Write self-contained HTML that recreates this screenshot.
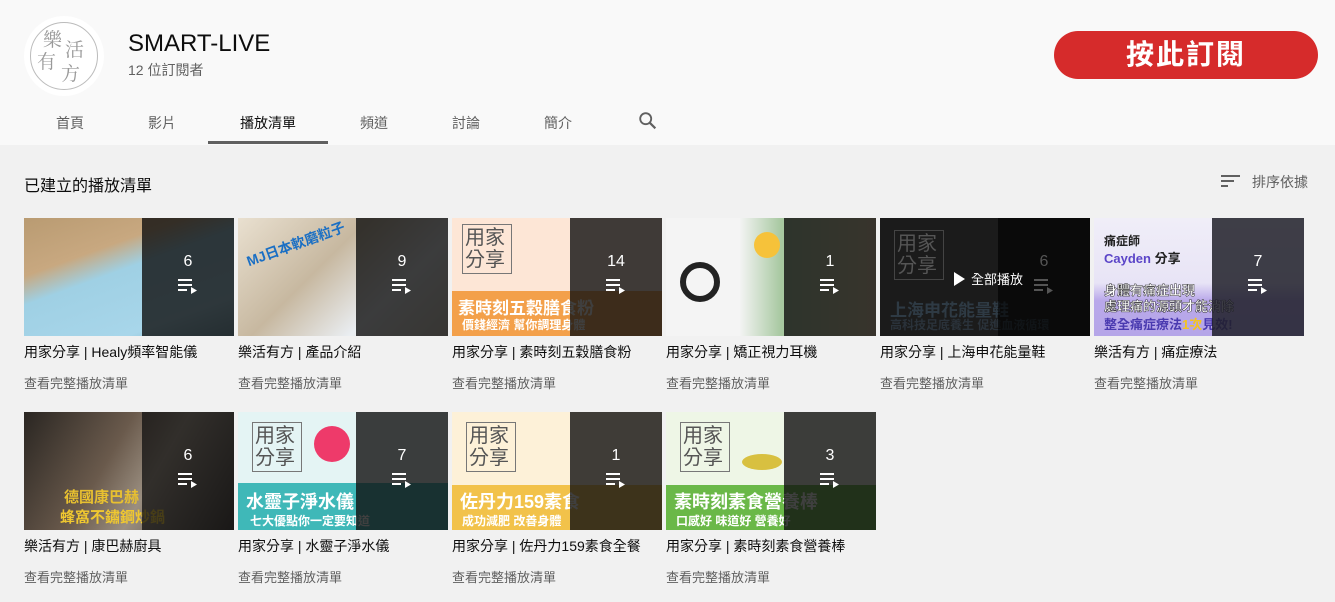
<!DOCTYPE html>
<html><head><meta charset="utf-8"><style>
*{margin:0;padding:0;box-sizing:border-box}
body{width:1335px;height:602px;overflow:hidden;background:#f1f1f1;font-family:"Liberation Sans","Noto Sans CJK TC",sans-serif;position:relative}
.hdr{position:absolute;left:0;top:0;width:1335px;height:145px;background:#f9f9f9}
.av{position:absolute;left:24px;top:16px;width:80px;height:80px;border-radius:50%;background:#fff}
.av .in{position:absolute;left:6px;top:6px;width:68px;height:68px;border-radius:50%;border:1px solid #bbb;color:#999;font-size:19px;line-height:20px;font-family:"Noto Serif CJK SC",serif}
.name{position:absolute;left:128px;top:30px;font-size:24px;color:#0d0d0d}
.subs{position:absolute;left:128px;top:60px;font-size:14px;color:#606060}
.btn{position:absolute;left:1054px;top:31px;width:264px;height:48px;border-radius:24px;background:#d62b2b;color:#fff;font-size:28px;font-weight:bold;text-align:center;line-height:48px;letter-spacing:2px}
.tab{position:absolute;top:113px;font-size:14px;color:#606060}
.ul{position:absolute;left:208px;top:141px;width:120px;height:3px;background:#606060}
.h2{position:absolute;left:24px;top:172px;font-size:16px;color:#0d0d0d}
.sort{position:absolute;left:1252px;top:172px;font-size:14px;color:#606060}
.card{position:absolute;width:210px;height:118px;overflow:hidden}
.ov{position:absolute;right:0;top:0;width:92px;height:118px;background:rgba(15,15,15,.8);color:#fff;text-align:center}
.ov .n{margin-top:34px;font-size:16px;line-height:20px}
.ov svg{display:block;margin:6px auto 0}
.t{position:absolute;font-size:14px;color:#0d0d0d;width:210px;white-space:nowrap;overflow:hidden}
.l{position:absolute;font-size:13px;color:#606060}
.cap{position:absolute;font-weight:bold;color:#fff;font-size:17px;white-space:nowrap}
.bx{white-space:normal!important;word-break:break-all}
</style></head><body>
<div class="hdr"></div>
<div class="av"><div class="in"><span style="position:absolute;left:12px;top:6px">樂</span><span style="position:absolute;left:34px;top:16px">活</span><span style="position:absolute;left:6px;top:28px">有</span><span style="position:absolute;left:30px;top:40px">方</span></div></div>
<div class="name">SMART-LIVE</div>
<div class="subs">12 位訂閱者</div>
<div class="btn">按此訂閱</div>
<div class="tab" style="left:56px">首頁</div>
<div class="tab" style="left:148px">影片</div>
<div class="tab" style="left:240px;color:#0d0d0d">播放清單</div>
<div class="tab" style="left:360px">頻道</div>
<div class="tab" style="left:452px">討論</div>
<div class="tab" style="left:544px">簡介</div>
<svg style="position:absolute;left:637px;top:110px" width="22" height="22" viewBox="0 0 24 24"><circle cx="9.5" cy="9.5" r="6" fill="none" stroke="#606060" stroke-width="2"/><path d="M14 14l6 6" stroke="#606060" stroke-width="2.4"/></svg>
<div class="ul"></div>
<div class="h2">已建立的播放清單</div>
<svg style="position:absolute;left:1221px;top:173px" width="20" height="16" viewBox="0 0 20 16"><rect x="0" y="2" width="19" height="2" fill="#606060"/><rect x="0" y="7" width="13" height="2" fill="#606060"/><rect x="0" y="12" width="7" height="2" fill="#606060"/></svg>
<div class="sort">排序依據</div>

<!-- row 1 -->
<div class="card" style="left:24px;top:218px;background:linear-gradient(160deg,#b99b72 0%,#c8a880 30%,#9fd0e4 45%,#a8d6ea 80%,#7aa8b8 100%)"><div class="ov"><div class="n">6</div><svg width="20" height="16" viewBox="0 0 20 16"><rect y="1" width="14" height="2" fill="#fff"/><rect y="6" width="14" height="2" fill="#fff"/><rect y="11" width="9" height="2" fill="#fff"/><path d="M13 9l6 3.5-6 3.5z" fill="#fff"/></svg></div></div>
<div class="card" style="left:238px;top:218px;background:linear-gradient(135deg,#e9e0d0,#c7b8a0 40%,#eaeef2 70%,#d8d0c0)"><span class="cap" style="left:6px;top:16px;color:#1a6fc4;font-size:14px;transform:rotate(-20deg)">MJ日本軟磨粒子</span><div class="ov"><div class="n">9</div><svg width="20" height="16" viewBox="0 0 20 16"><rect y="1" width="14" height="2" fill="#fff"/><rect y="6" width="14" height="2" fill="#fff"/><rect y="11" width="9" height="2" fill="#fff"/><path d="M13 9l6 3.5-6 3.5z" fill="#fff"/></svg></div></div>
<div class="card" style="left:452px;top:218px;background:linear-gradient(180deg,#fde6d6 0%,#fde6d6 62%,#f3a04a 62%,#f3a04a 100%)"><span class="cap bx" style="left:10px;top:6px;color:#555;font-size:20px;font-weight:normal;border:1px solid #777;line-height:22px;width:50px;padding:2px">用家分享</span><span class="cap" style="left:6px;top:76px">素時刻五穀膳食粉</span><span class="cap" style="left:10px;top:98px;font-size:12px">價錢經濟 幫你調理身體</span><div class="ov"><div class="n">14</div><svg width="20" height="16" viewBox="0 0 20 16"><rect y="1" width="14" height="2" fill="#fff"/><rect y="6" width="14" height="2" fill="#fff"/><rect y="11" width="9" height="2" fill="#fff"/><path d="M13 9l6 3.5-6 3.5z" fill="#fff"/></svg></div></div>
<div class="card" style="left:666px;top:218px;background:linear-gradient(90deg,#f4f4f4 0%,#f4f4f4 35%,#a7c8a0 55%,#d8c4a0 100%)"><div style="position:absolute;left:14px;top:44px;width:40px;height:40px;border-radius:50%;border:6px solid #222"></div><div style="position:absolute;left:88px;top:14px;width:26px;height:26px;border-radius:50%;background:#f6c23a"></div><div class="ov"><div class="n">1</div><svg width="20" height="16" viewBox="0 0 20 16"><rect y="1" width="14" height="2" fill="#fff"/><rect y="6" width="14" height="2" fill="#fff"/><rect y="11" width="9" height="2" fill="#fff"/><path d="M13 9l6 3.5-6 3.5z" fill="#fff"/></svg></div></div>
<div class="card" style="left:880px;top:218px;background:#1b1b1b"><span class="cap bx" style="left:14px;top:12px;color:#555;font-size:20px;font-weight:normal;border:1px solid #444;line-height:22px;width:50px;padding:2px">用家分享</span><span class="cap" style="left:10px;top:78px;color:#2e3a44">上海申花能量鞋</span><span class="cap" style="left:10px;top:98px;color:#2a323a;font-size:12px">高科技足底養生 促進血液循環</span><div class="ov" style="background:rgba(0,0,0,.6)"><div class="n" style="color:#555">6</div><svg width="20" height="16" viewBox="0 0 20 16"><rect y="1" width="14" height="2" fill="#555"/><rect y="6" width="14" height="2" fill="#555"/><rect y="11" width="9" height="2" fill="#555"/><path d="M13 9l6 3.5-6 3.5z" fill="#555"/></svg></div><div style="position:absolute;left:74px;top:51px;color:#fff;font-size:13px"><span style="display:inline-block;width:0;height:0;border-left:11px solid #fff;border-top:7px solid transparent;border-bottom:7px solid transparent;vertical-align:-2px;margin-right:6px"></span>全部播放</div></div>
<div class="card" style="left:1094px;top:218px;background:linear-gradient(180deg,#f0eef8 0%,#e8e4f6 55%,#b9a8ea 70%,#b5a6e8 100%)"><span class="cap" style="left:10px;top:14px;color:#222;font-size:12px">痛症師</span><span class="cap" style="left:10px;top:30px;color:#5b45c8;font-size:13px">Cayden <span style="color:#222">分享</span></span><span class="cap" style="left:10px;top:62px;color:#fff;font-size:13px;-webkit-text-stroke:.5px #333">身體有痛症出現</span><span class="cap" style="left:10px;top:78px;color:#fff;font-size:13px;-webkit-text-stroke:.5px #333">處理痛的源頭才能消除</span><span class="cap" style="left:10px;top:96px;color:#4a3ab0;font-size:13px">整全痛症療法<span style="color:#f4c320">1次</span>見效!</span><div class="ov" style="background:rgba(30,30,40,.85)"><div class="n">7</div><svg width="20" height="16" viewBox="0 0 20 16"><rect y="1" width="14" height="2" fill="#fff"/><rect y="6" width="14" height="2" fill="#fff"/><rect y="11" width="9" height="2" fill="#fff"/><path d="M13 9l6 3.5-6 3.5z" fill="#fff"/></svg></div></div>

<div class="t" style="left:24px;top:342px">用家分享 | Healy頻率智能儀</div><div class="l" style="left:24px;top:373px">查看完整播放清單</div>
<div class="t" style="left:238px;top:342px">樂活有方 | 產品介紹</div><div class="l" style="left:238px;top:373px">查看完整播放清單</div>
<div class="t" style="left:452px;top:342px">用家分享 | 素時刻五穀膳食粉</div><div class="l" style="left:452px;top:373px">查看完整播放清單</div>
<div class="t" style="left:666px;top:342px">用家分享 | 矯正視力耳機</div><div class="l" style="left:666px;top:373px">查看完整播放清單</div>
<div class="t" style="left:880px;top:342px">用家分享 | 上海申花能量鞋</div><div class="l" style="left:880px;top:373px">查看完整播放清單</div>
<div class="t" style="left:1094px;top:342px">樂活有方 | 痛症療法</div><div class="l" style="left:1094px;top:373px">查看完整播放清單</div>

<!-- row 2 -->
<div class="card" style="left:24px;top:412px;background:linear-gradient(120deg,#2a2622,#6a5a4c 40%,#9a8e80 60%,#3a3430)"><span class="cap" style="left:40px;top:74px;color:#e8c030;font-size:15px">德國康巴赫</span><span class="cap" style="left:36px;top:94px;color:#f0c830;font-size:15px">蜂窩不鏽鋼炒鍋</span><div class="ov" style="background:rgba(15,15,15,.75)"><div class="n">6</div><svg width="20" height="16" viewBox="0 0 20 16"><rect y="1" width="14" height="2" fill="#fff"/><rect y="6" width="14" height="2" fill="#fff"/><rect y="11" width="9" height="2" fill="#fff"/><path d="M13 9l6 3.5-6 3.5z" fill="#fff"/></svg></div></div>
<div class="card" style="left:238px;top:412px;background:linear-gradient(180deg,#e4f4f4 0%,#e4f4f4 60%,#3fb8b8 60%,#3fb8b8 100%)"><span class="cap bx" style="left:14px;top:10px;color:#555;font-size:20px;font-weight:normal;border:1px solid #777;line-height:22px;width:50px;padding:2px">用家分享</span><div style="position:absolute;left:76px;top:14px;width:36px;height:36px;border-radius:50%;background:#ee3a6a"></div><span class="cap" style="left:8px;top:76px;font-size:18px">水靈子淨水儀</span><span class="cap" style="left:12px;top:100px;font-size:12px">七大優點你一定要知道</span><div class="ov"><div class="n">7</div><svg width="20" height="16" viewBox="0 0 20 16"><rect y="1" width="14" height="2" fill="#fff"/><rect y="6" width="14" height="2" fill="#fff"/><rect y="11" width="9" height="2" fill="#fff"/><path d="M13 9l6 3.5-6 3.5z" fill="#fff"/></svg></div></div>
<div class="card" style="left:452px;top:412px;background:linear-gradient(180deg,#fdf1d8 0%,#fdf1d8 62%,#f2c24a 62%,#f2c24a 100%)"><span class="cap bx" style="left:14px;top:10px;color:#555;font-size:20px;font-weight:normal;border:1px solid #777;line-height:22px;width:50px;padding:2px">用家分享</span><span class="cap" style="left:8px;top:76px;font-size:18px">佐丹力159素食</span><span class="cap" style="left:10px;top:100px;font-size:12px">成功減肥 改善身體</span><div class="ov"><div class="n">1</div><svg width="20" height="16" viewBox="0 0 20 16"><rect y="1" width="14" height="2" fill="#fff"/><rect y="6" width="14" height="2" fill="#fff"/><rect y="11" width="9" height="2" fill="#fff"/><path d="M13 9l6 3.5-6 3.5z" fill="#fff"/></svg></div></div>
<div class="card" style="left:666px;top:412px;background:linear-gradient(180deg,#eef6e6 0%,#eef6e6 62%,#6ab848 62%,#6ab848 100%)"><span class="cap bx" style="left:14px;top:10px;color:#555;font-size:20px;font-weight:normal;border:1px solid #777;line-height:22px;width:50px;padding:2px">用家分享</span><div style="position:absolute;left:76px;top:42px;width:40px;height:16px;border-radius:50%;background:#d8c040"></div><span class="cap" style="left:8px;top:76px;font-size:18px">素時刻素食營養棒</span><span class="cap" style="left:10px;top:100px;font-size:12px">口感好 味道好 營養好</span><div class="ov"><div class="n">3</div><svg width="20" height="16" viewBox="0 0 20 16"><rect y="1" width="14" height="2" fill="#fff"/><rect y="6" width="14" height="2" fill="#fff"/><rect y="11" width="9" height="2" fill="#fff"/><path d="M13 9l6 3.5-6 3.5z" fill="#fff"/></svg></div></div>

<div class="t" style="left:24px;top:536px">樂活有方 | 康巴赫廚具</div><div class="l" style="left:24px;top:567px">查看完整播放清單</div>
<div class="t" style="left:238px;top:536px">用家分享 | 水靈子淨水儀</div><div class="l" style="left:238px;top:567px">查看完整播放清單</div>
<div class="t" style="left:452px;top:536px">用家分享 | 佐丹力159素食全餐</div><div class="l" style="left:452px;top:567px">查看完整播放清單</div>
<div class="t" style="left:666px;top:536px">用家分享 | 素時刻素食營養棒</div><div class="l" style="left:666px;top:567px">查看完整播放清單</div>
</body></html>
